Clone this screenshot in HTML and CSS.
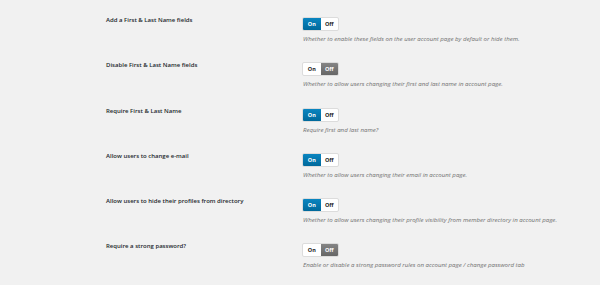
FILE: index.html
```html
<!DOCTYPE html>
<html lang="en">
<head>
    <meta charset="UTF-8">
    <title>Account Settings</title>
    <link rel="stylesheet" href="styles.css">
</head>
<body>
    <div class="settings">

        <div class="row">
            <div class="label">Add a First &amp; Last Name fields</div>
            <div class="field">
                <div class="toggle on"><span class="opt">On</span><span class="opt">Off</span></div>
                <p class="desc">Whether to enable these fields on the user account page by default or hide them.</p>
            </div>
        </div>

        <div class="row">
            <div class="label">Disable First &amp; Last Name fields</div>
            <div class="field">
                <div class="toggle off"><span class="opt">On</span><span class="opt">Off</span></div>
                <p class="desc">Whether to allow users changing their first and last name in account page.</p>
            </div>
        </div>

        <div class="row">
            <div class="label">Require First &amp; Last Name</div>
            <div class="field">
                <div class="toggle on"><span class="opt">On</span><span class="opt">Off</span></div>
                <p class="desc">Require first and last name?</p>
            </div>
        </div>

        <div class="row">
            <div class="label">Allow users to change e-mail</div>
            <div class="field">
                <div class="toggle on"><span class="opt">On</span><span class="opt">Off</span></div>
                <p class="desc">Whether to allow users changing their email in account page.</p>
            </div>
        </div>

        <div class="row">
            <div class="label">Allow users to hide their profiles from directory</div>
            <div class="field">
                <div class="toggle on"><span class="opt">On</span><span class="opt">Off</span></div>
                <p class="desc">Whether to allow users changing their profile visibility from member directory in account page.</p>
            </div>
        </div>

        <div class="row">
            <div class="label">Require a strong password?</div>
            <div class="field">
                <div class="toggle off"><span class="opt">On</span><span class="opt">Off</span></div>
                <p class="desc">Enable or disable a strong password rules on account page / change password tab</p>
            </div>
        </div>

    </div>
</body>
</html>
```

FILE: styles.css
```css
body{
    margin: 0;
    background-color: #f1f1f1;
    font-family: "Open Sans", sans-serif;
    color: #23282d;
}

.settings{
    padding-left: 106px;
}

.row{
    display: flex;
    height: 45.3px;
    box-sizing: border-box;
    padding-top: 17px;
}

.label{
    width: 196px;
    font-size: 6px;
    font-weight: 600;
    line-height: 8px;
    margin-top: -1px;
}

.toggle{
    display: flex;
    width: 37px;
    height: 14px;
    box-sizing: border-box;
    border: 1px solid #dcdcdc;
    border-radius: 2px;
    background: #fff;
    overflow: hidden;
}

.toggle .opt{
    flex: 1;
    display: flex;
    justify-content: center;
    align-items: center;
    font-size: 5.5px;
    font-weight: 700;
    color: #222;
}

/* the active half gets the colour */
.toggle.on .opt:first-child{
    background: linear-gradient(#0a85c0, #00699b);
    color: #fff;
}

.toggle.off .opt:last-child{
    background: linear-gradient(#858585, #666);
    color: #fff;
}

.desc{
    margin: 4px 0 0 1px;
    font-size: 6.1px;
    font-style: italic;
    color: #707070;
    line-height: 8px;
}
```
